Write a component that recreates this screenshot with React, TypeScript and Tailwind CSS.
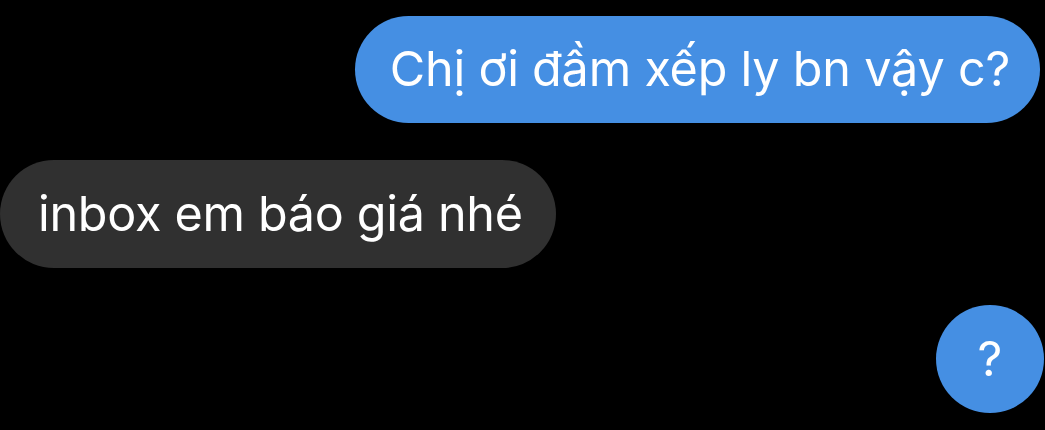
export default function App() {
  return (
    <div
      className="w-[1045px] h-[430px] bg-black overflow-hidden flex flex-col pt-[16px] gap-[37px] text-white"
      style={{ fontFamily: "Inter, 'Liberation Sans', sans-serif" }}
    >
      <div className="flex justify-end pr-[5px]">
        <div className="h-[107px] flex items-center rounded-full bg-[#458fe3] pl-[35px] pr-[30px] text-[48.5px] tracking-[-0.2px]">
          Chị ơi đầm xếp ly bn vậy c?
        </div>
      </div>
      <div className="flex justify-start">
        <div className="h-[108px] flex items-center rounded-full bg-[#303030] pl-[38px] pr-[33px] text-[48.5px] tracking-[-0.3px]">
          inbox em báo giá nhé
        </div>
      </div>
      <div className="flex justify-end pr-[1px]">
        <div className="w-[108px] h-[108px] flex items-center justify-center rounded-full bg-[#458fe3] text-[48.5px]">
          ?
        </div>
      </div>
    </div>
  );
}
